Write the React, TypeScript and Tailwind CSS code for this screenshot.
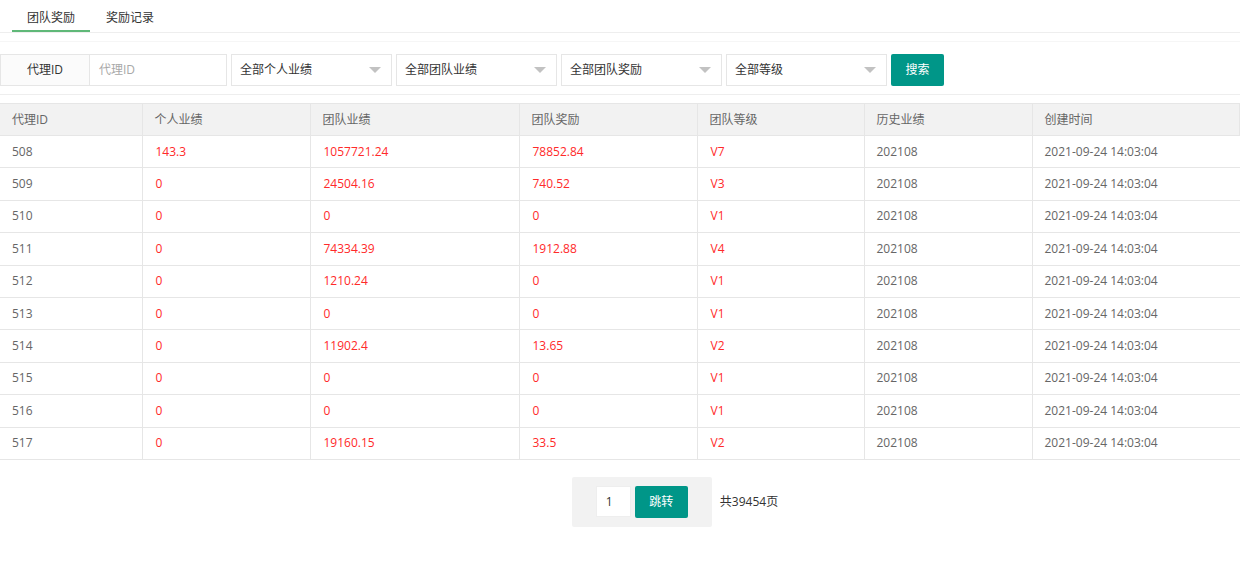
const rows = [
  ['508', '143.3', '1057721.24', '78852.84', 'V7'],
  ['509', '0', '24504.16', '740.52', 'V3'],
  ['510', '0', '0', '0', 'V1'],
  ['511', '0', '74334.39', '1912.88', 'V4'],
  ['512', '0', '1210.24', '0', 'V1'],
  ['513', '0', '0', '0', 'V1'],
  ['514', '0', '11902.4', '13.65', 'V2'],
  ['515', '0', '0', '0', 'V1'],
  ['516', '0', '0', '0', 'V1'],
  ['517', '0', '19160.15', '33.5', 'V2'],
]

const selects = ['全部个人业绩', '全部团队业绩', '全部团队奖励', '全部等级']

function Select({ label }: { label: string }) {
  return (
    <div className="flex h-[32px] w-[161px] items-center justify-between border border-[#e6e6e6] bg-white pl-[8px] pr-[10px] text-[#333]">
      <span>{label}</span>
      <span className="h-0 w-0 border-x-[6px] border-t-[6px] border-x-transparent border-t-[#c2c2c2]" />
    </div>
  )
}

export default function App() {
  return (
    <div
      className="min-h-[569px] bg-white text-[12px] text-[#666]"
      style={{ fontFamily: '"Open Sans", "Noto Sans CJK SC", sans-serif' }}
    >
      {/* 标签页 */}
      <div className="flex h-[33px] border-b border-[#eee] pl-[12px]">
        <div className="flex w-[78px] items-center justify-center border-b-2 border-[#5fb878] pt-[5px] text-[#333]">团队奖励</div>
        <div className="flex w-[80px] items-center justify-center pt-[3px] text-[#333]">奖励记录</div>
      </div>
      <div className="mt-[8px] border-t border-[#f6f6f6]" />

      {/* 搜索栏 */}
      <div className="flex items-center gap-[4px] pt-[12px] pb-[8px]">
        <div className="flex h-[32px]">
          <div className="flex w-[90px] items-center justify-center border border-[#e6e6e6] bg-[#fbfbfb] text-[#333]">代理ID</div>
          <div className="flex w-[137px] items-center border border-l-0 border-[#e6e6e6] pl-[9px] text-[#a8a8a8]">代理ID</div>
        </div>
        {selects.map((s) => (
          <Select key={s} label={s} />
        ))}
        <button className="h-[32px] w-[53px] rounded-[2px] bg-[#009688] text-white">搜索</button>
      </div>
      <div className="border-t border-[#eee]" />

      {/* 表格 */}
      <table className="mt-[8px] w-full border-collapse text-left">
        <colgroup>
          <col className="w-[142px]" />
          <col className="w-[168px]" />
          <col className="w-[209px]" />
          <col className="w-[178px]" />
          <col className="w-[167px]" />
          <col className="w-[168px]" />
          <col />
        </colgroup>
        <thead>
          <tr className="h-[32px] bg-[#f2f2f2]">
            {['代理ID', '个人业绩', '团队业绩', '团队奖励', '团队等级', '历史业绩', '创建时间'].map((h) => (
              <th key={h} className="border border-l-0 border-[#e6e6e6] pt-[1px] pl-[12px] font-normal text-[#666]">
                {h}
              </th>
            ))}
          </tr>
        </thead>
        <tbody>
          {rows.map((r) => (
            <tr key={r[0]} className="h-[32.4px]">
              <td className="border border-l-0 border-[#e6e6e6] pl-[12px] text-[#666]">{r[0]}</td>
              {r.slice(1).map((v, i) => (
                <td key={i} className="border border-[#e6e6e6] pl-[13px] text-[#ff2a2a]">
                  {v}
                </td>
              ))}
              <td className="border border-[#e6e6e6] pl-[12px] text-[#666]">202108</td>
              <td className="border border-r-0 border-[#e6e6e6] pl-[12px] text-[#666]">2021-09-24 14:03:04</td>
            </tr>
          ))}
        </tbody>
      </table>

      {/* 分页 */}
      <div className="mt-[17px] flex items-center justify-center pl-[110px]">
        <div className="flex h-[50px] w-[140px] items-center gap-[4px] rounded-[2px] bg-[#f2f2f2] pl-[24px]">
          <div className="flex h-[31px] w-[35px] items-center border border-[#eee] bg-white pl-[9px] text-[#333]">1</div>
          <button className="h-[32px] w-[53px] rounded-[2px] bg-[#009688] text-white">跳转</button>
        </div>
        <span className="ml-[8px] text-[#333]">共39454页</span>
      </div>
    </div>
  )
}
